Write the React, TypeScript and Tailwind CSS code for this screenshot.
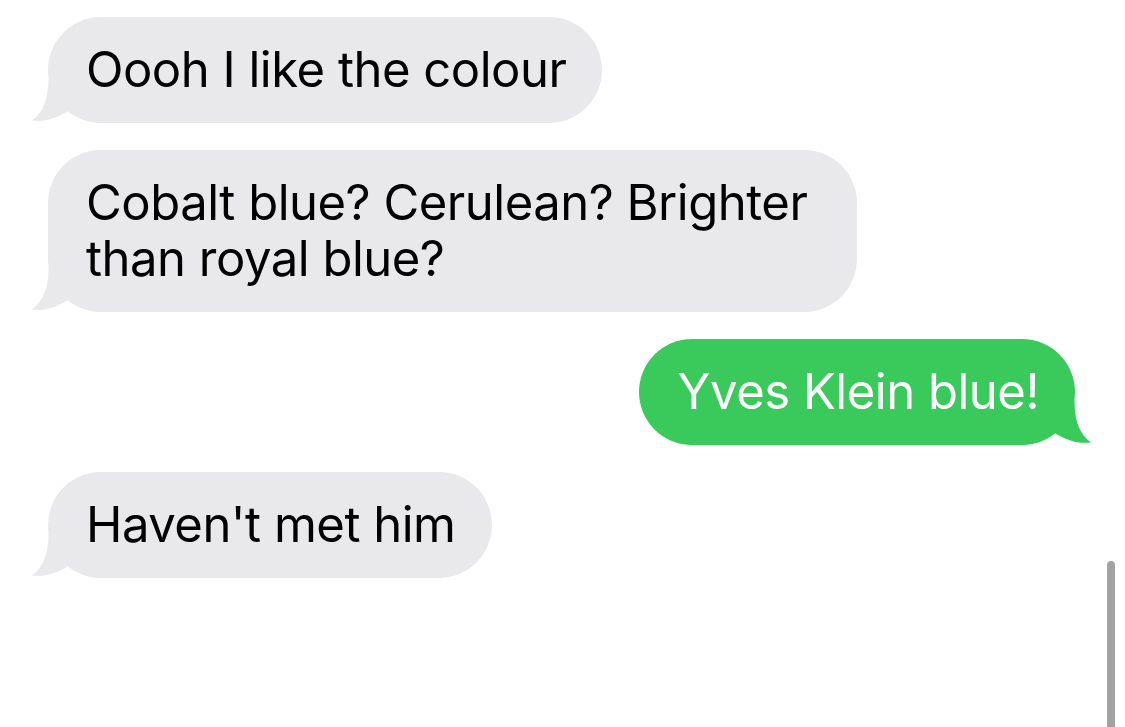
function Tail({ color, side }: { color: string; side: "left" | "right" }) {
  return (
    <svg
      width="50"
      height="50"
      viewBox="0 0 50 50"
      className={
        side === "left"
          ? "absolute bottom-0 left-[-20px]"
          : "absolute bottom-0 right-[-20px] scale-x-[-1]"
      }
    >
      <path
        d="M20.5 5 C20.5 25 16 39 4 47.5 C18 49 28 45 39 39 L46 20 Z"
        fill={color}
      />
    </svg>
  );
}

function Received({ children, className = "" }: { children: React.ReactNode; className?: string }) {
  return (
    <div className="flex justify-start pl-[48px]">
      <div
        className={
          "relative rounded-[53px] bg-[#e9e9eb] pl-[38px] pr-[36px] py-[25px] text-black " + className
        }
      >
        <Tail color="#e9e9eb" side="left" />
        <span className="relative">{children}</span>
      </div>
    </div>
  );
}

function Sent({ children }: { children: React.ReactNode }) {
  return (
    <div className="flex justify-end pr-[50px]">
      <div className="relative rounded-[53px] bg-[#3aca5c] pl-[38px] pr-[36px] py-[25px] text-white">
        <Tail color="#3aca5c" side="right" />
        <span className="relative">{children}</span>
      </div>
    </div>
  );
}

export default function App() {
  return (
    <div
      className="relative h-[727px] w-[1125px] overflow-hidden bg-white text-[49px] leading-[56px] tracking-[-0.01em]"
      style={{ fontFamily: "Inter, 'Noto Sans', sans-serif" }}
    >
      <div className="flex flex-col gap-[27px] pt-[17px]">
        <Received>Oooh I like the colour</Received>
        <Received className="w-[809px]">
          Cobalt blue? Cerulean? Brighter
          <br />
          than royal blue?
        </Received>
        <Sent>Yves Klein blue!</Sent>
        <Received>Haven't met him</Received>
      </div>

      {/* scroll indicator */}
      <div className="absolute left-[1107px] top-[561px] h-[200px] w-[8px] rounded-full bg-[#a2a2a2]" />
    </div>
  );
}
